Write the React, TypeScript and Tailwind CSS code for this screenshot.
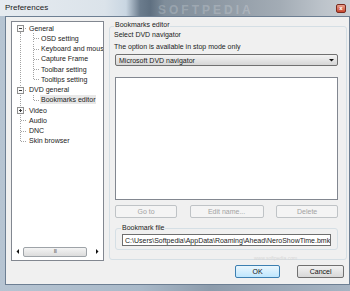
import React from 'react';

type Node = {
  label: string;
  level: 0 | 1;
  exp?: '-' | '+';
  first?: boolean;
  last?: boolean;
  lastChild?: boolean;
  selected?: boolean;
};

const tree: Node[] = [
  { label: 'General', level: 0, exp: '-', first: true },
  { label: 'OSD setting', level: 1 },
  { label: 'Keyboard and mouse', level: 1 },
  { label: 'Capture Frame', level: 1 },
  { label: 'Toolbar setting', level: 1 },
  { label: 'Tooltips setting', level: 1, lastChild: true },
  { label: 'DVD general', level: 0, exp: '-' },
  { label: 'Bookmarks editor', level: 1, lastChild: true, selected: true },
  { label: 'Video', level: 0, exp: '+' },
  { label: 'Audio', level: 0 },
  { label: 'DNC', level: 0 },
  { label: 'Skin browser', level: 0, last: true },
];

function Gutter({ node }: { node: Node }) {
  const w = node.level === 0 ? 16 : 28;
  const dot = { stroke: '#a3a3a3', strokeWidth: 1, strokeDasharray: '1 1' };
  return (
    <svg width={w} height={10} className="shrink-0">
      <line x1={8.5} y1={node.first ? 5 : 0} x2={8.5} y2={node.last ? 5.5 : 10} {...dot} />
      {node.level === 0 ? (
        <line x1={node.exp ? 11 : 9} y1={5.5} x2={15} y2={5.5} {...dot} />
      ) : (
        <>
          <line x1={21.5} y1={0} x2={21.5} y2={node.lastChild ? 5.5 : 10} {...dot} />
          <line x1={22} y1={5.5} x2={27} y2={5.5} {...dot} />
        </>
      )}
      {node.exp && (
        <>
          <rect x={5.5} y={2.5} width={6} height={6} fill="#fafafa" stroke="#8f8f8f" />
          <line x1={7} y1={5.5} x2={10} y2={5.5} stroke="#3a3a3a" />
          {node.exp === '+' && <line x1={8.5} y1={4} x2={8.5} y2={7} stroke="#3a3a3a" />}
        </>
      )}
    </svg>
  );
}

function Arrow({ dir }: { dir: 'left' | 'right' | 'down' }) {
  const pts = dir === 'left' ? '3,0 3,5 0.5,2.5' : dir === 'right' ? '0,0 0,5 2.5,2.5' : '0,0 5,0 2.5,2.5';
  return (
    <svg width={dir === 'down' ? 5 : 3} height={dir === 'down' ? 3 : 5}>
      <polygon points={pts} fill="#111" />
    </svg>
  );
}

function Btn({ label, w, disabled, primary }: { label: string; w: string; disabled?: boolean; primary?: boolean }) {
  const base = 'h-[13px] rounded-[2px] border flex items-center justify-center text-[7px] leading-none';
  if (disabled) {
    return <div className={`${base} ${w} border-[#bfc3c6] bg-[#f4f4f4] text-[#a3a3a3]`}>{label}</div>;
  }
  if (primary) {
    return (
      <div className={`${base} ${w} border-[#3c7fb1] bg-linear-to-b from-[#eaf6fd] to-[#bee6fd] text-[#111]`}>
        {label}
      </div>
    );
  }
  return (
    <div className={`${base} ${w} border-[#707070] bg-linear-to-b from-[#f2f2f2] to-[#d8d8d8] text-[#111]`}>
      {label}
    </div>
  );
}

export default function App() {
  return (
    <div className="w-[350px] h-[291px] flex flex-col bg-[linear-gradient(90deg,#b6c4d2_0%,#a9b9c9_40%,#8d9cac_60%,#a6b4c3_100%)] font-['Liberation_Sans',Arial,sans-serif] text-[#1b1b1b] overflow-hidden">
      {/* Title bar */}
      <div className="relative h-[16px] flex items-center justify-between bg-[linear-gradient(90deg,#e6ebf0_0%,#dbe3ea_30%,#c9d6e2_36%,#6b7c8d_40%,#5f7081_43%,#7f8d9a_47%,#8e99a4_62%,#a3acb5_80%,#bcc3ca_92%,#c9ced3_100%)]">
        <span className="pl-[5px] text-[8px] text-[#1a1a1a]">Preferences</span>
        <span className="absolute left-[158px] top-[1px] text-[12px] font-bold tracking-[3px] text-white/20">SOFTPEDIA</span>
        <div className="mr-[4px] w-[10px] h-[9px] rounded-[2px] border border-[#7a2a1e] bg-linear-to-b from-[#e8a18f] to-[#c8442c] flex items-center justify-center">
          <span className="text-white text-[6px] font-bold leading-none">x</span>
        </div>
      </div>

      {/* Client */}
      <div className="flex-1 px-[5px] pb-[6px] flex">
        <div className="flex-1 border border-[#6d7f93] bg-[#f0f0f0] flex flex-col">
          <div className="flex pt-[4px] pl-[5px] pr-[2px] gap-[5px]">
            {/* Tree */}
            <div className="w-[93px] h-[240px] border border-[#828790] bg-white flex flex-col">
              <div className="flex-1 pt-px">
                {tree.map((n) => (
                  <div key={n.label} className="h-[10.25px] flex items-center overflow-hidden whitespace-nowrap">
                    <Gutter node={n} />
                    <span
                      className={`text-[7px] leading-[9px] px-px ${n.selected ? 'bg-[#e8e8e8]' : ''}`}
                    >
                      {n.label}
                    </span>
                  </div>
                ))}
              </div>
              <div className="h-[11px] mb-[3px] flex items-center">
                <div className="w-[11px] flex justify-center">
                  <Arrow dir="left" />
                </div>
                <div className="w-[64px] h-[10px] rounded-[2px] border border-[#9ea3a8] bg-linear-to-b from-[#f4f4f4] to-[#dcdcdc] flex items-center justify-center">
                  <span className="text-[5px] text-[#555] tracking-[-0.5px] leading-none">III</span>
                </div>
                <div className="flex-1" />
                <div className="w-[11px] flex justify-center">
                  <Arrow dir="right" />
                </div>
              </div>
            </div>

            {/* Right group */}
            <div className="flex-1 pt-[5px]">
              <div className="relative h-[234px] border border-[#d5dfe5] rounded-[3px] pl-[5px] pr-[8px] flex flex-col">
                <span className="-mt-[7px] w-fit bg-[#f0f0f0] px-px -ml-px text-[7px] leading-[10px]">Bookmarks editor</span>
                <span className="text-[7px] leading-[10px] -ml-px">Select DVD navigator</span>
                <span className="mt-[2px] text-[7px] leading-[10px] -ml-px">The option is available in stop mode only</span>
                <div className="mt-[2px] h-[12px] rounded-[2px] border border-[#707070] bg-linear-to-b from-[#f3f3f3] to-[#d6d6d6] flex items-center justify-between pl-[3px] pr-[3px]">
                  <span className="text-[7px] leading-none">Microsoft DVD navigator</span>
                  <Arrow dir="down" />
                </div>
                <div className="mt-[11px] h-[123px] border border-[#828790] bg-white" />
                <div className="mt-[5px] flex justify-between">
                  <Btn label="Go to" w="w-[62px]" disabled />
                  <Btn label="Edit name..." w="w-[74px]" disabled />
                  <Btn label="Delete" w="w-[62px]" disabled />
                </div>
                <div className="mt-[10px] h-[22px] border border-[#d5dfe5] rounded-[3px] px-[6px] flex flex-col">
                  <span className="-mt-[6px] w-fit bg-[#f0f0f0] px-px -ml-px text-[7px] leading-[10px]">Bookmark file</span>
                  <div className="mt-px h-[12px] border border-[#6e6e6e] bg-white flex items-center overflow-hidden whitespace-nowrap pl-[2px]">
                    <span className="text-[7px] leading-none">C:\Users\Softpedia\AppData\Roaming\Ahead\NeroShowTime.bmk</span>
                  </div>
                </div>
                <span className="absolute left-[144px] bottom-[-3px] text-[5px] text-[#d6d6d6]">www.softpedia.com</span>
              </div>
            </div>
          </div>

          {/* OK / Cancel */}
          <div className="mt-[4px] flex justify-end gap-[17px] pr-[5px]">
            <Btn label="OK" w="w-[45px]" primary />
            <Btn label="Cancel" w="w-[47px]" />
          </div>
        </div>
      </div>
    </div>
  );
}
